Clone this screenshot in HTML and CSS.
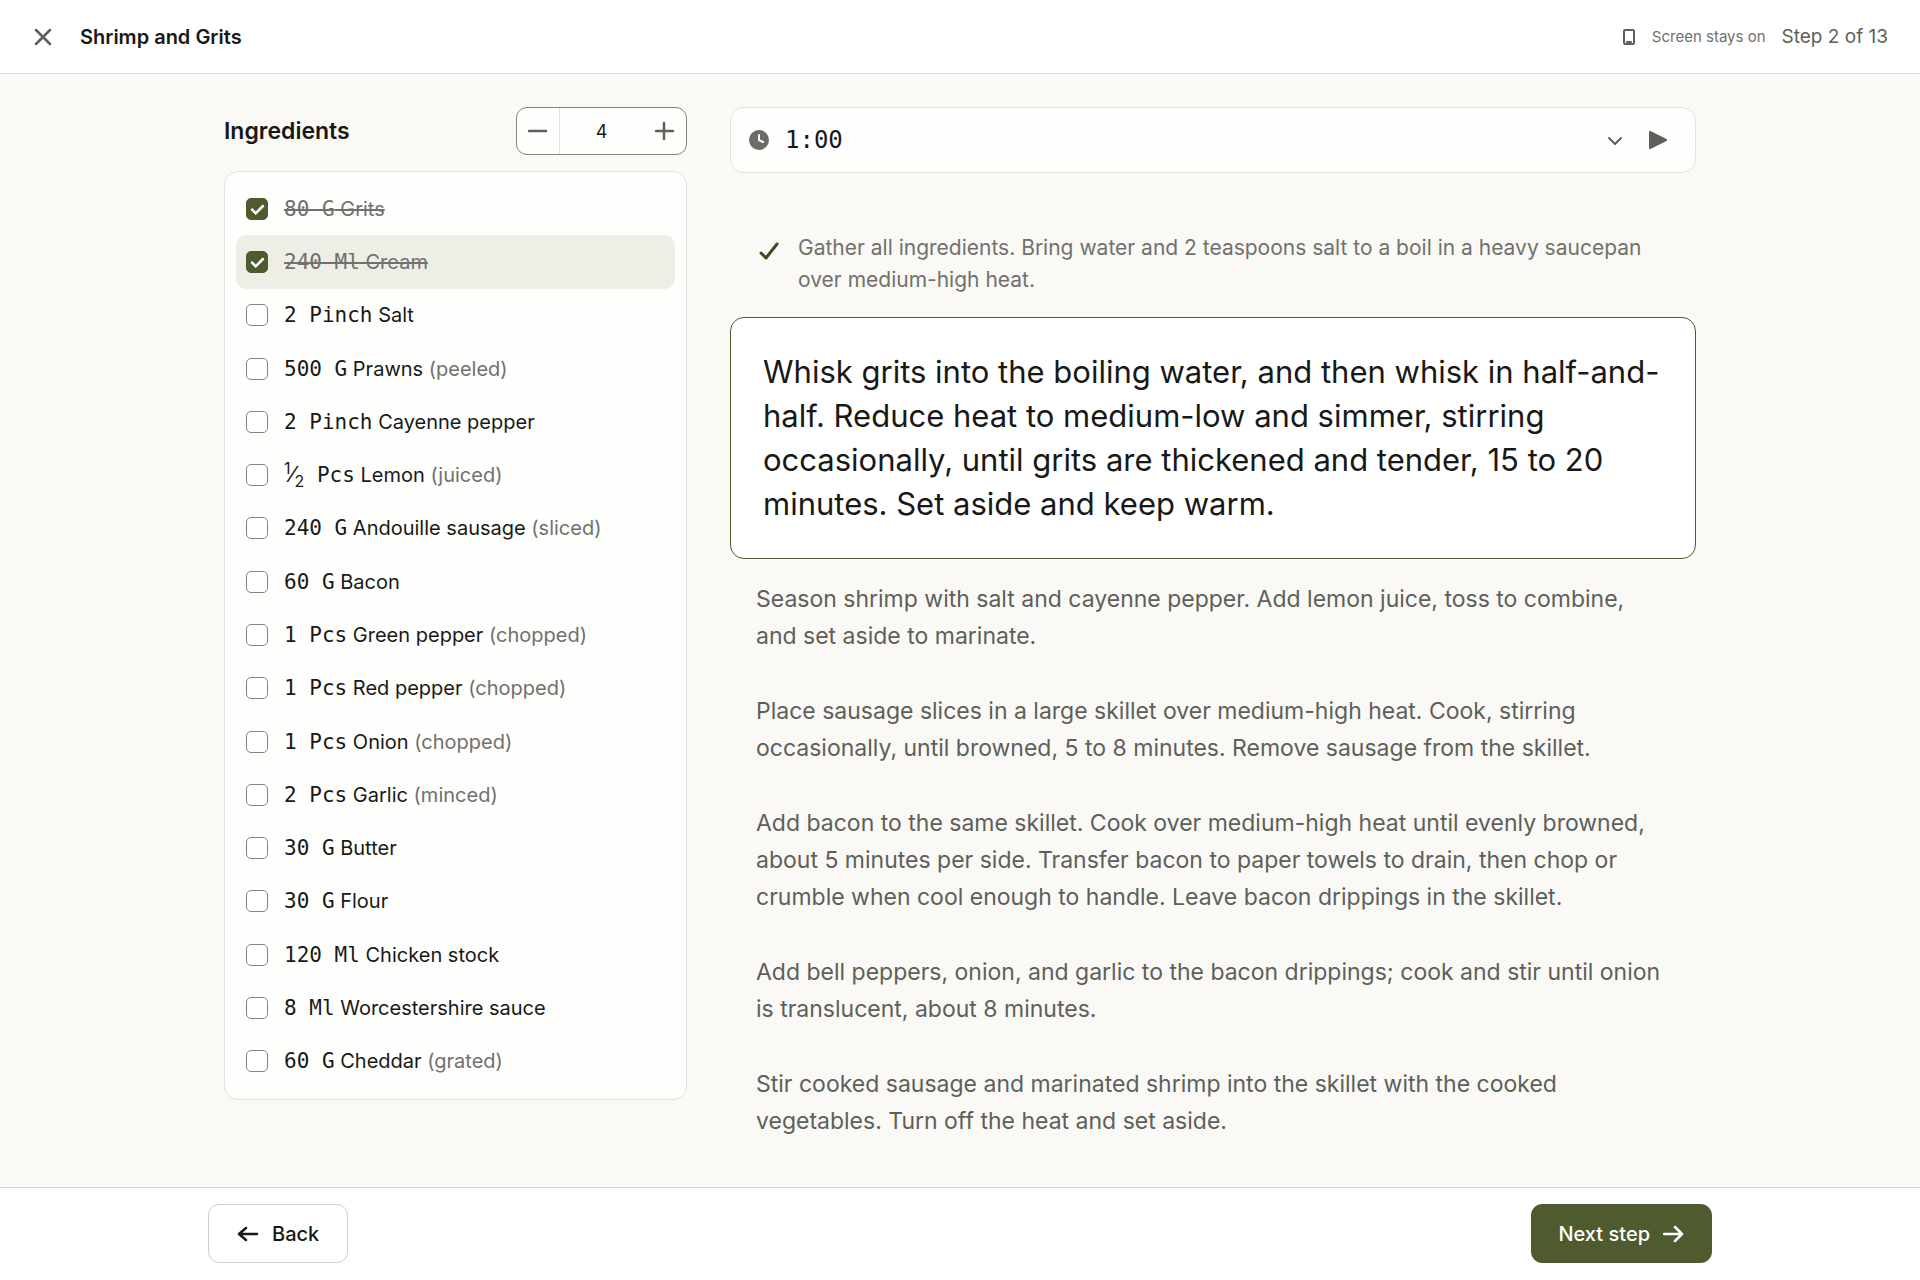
FILE: index.html
```html
<!DOCTYPE html>
<html lang="en">
<head>
  <meta charset="UTF-8">
  <meta name="viewport" content="width=device-width, initial-scale=1">
  <title>Shrimp and Grits</title>
  <link rel="stylesheet" href="styles.css">
</head>
<body>
  <header class="topbar">
    <button class="icon-btn" type="button" aria-label="Close">
      <svg class="bold" width="18" height="18" viewBox="0 0 18 18"><path d="M2 2l14 14M16 2L2 16"/></svg>
    </button>
    <h1 class="topbar__title">Shrimp and Grits</h1>
    <div class="topbar__status">
      <svg class="phone" width="14" height="18" viewBox="0 0 14 18"><rect x="2" y="2" width="10" height="14" rx="1"/><path d="M5 14h4"/></svg>
      <span class="topbar__screen">Screen stays on</span>
      <span class="topbar__step">Step 2 of 13</span>
    </div>
  </header>

  <main class="cook">
    <section class="ingredients">
      <div class="ingredients__head">
        <h2>Ingredients</h2>
        <div class="stepper">
          <button type="button" class="stepper__minus" aria-label="Fewer servings">
            <svg class="bold" width="20" height="20" viewBox="0 0 20 20"><path d="M1 10h17"/></svg>
          </button>
          <input type="text" value="4" aria-label="Servings">
          <button type="button" aria-label="More servings">
            <svg class="bold" width="20" height="20" viewBox="0 0 20 20"><path d="M1 10h17M9 2v16"/></svg>
          </button>
        </div>
      </div>
      <ul class="ingredients__list">
        <li><label><input type="checkbox" checked><span><span class="qty">80 G</span> Grits</span></label></li>
        <li class="active"><label><input type="checkbox" checked><span><span class="qty">240 Ml</span> Cream</span></label></li>
        <li><label><input type="checkbox"><span><span class="qty">2 Pinch</span> Salt</span></label></li>
        <li><label><input type="checkbox"><span><span class="qty">500 G</span> Prawns <em>(peeled)</em></span></label></li>
        <li><label><input type="checkbox"><span><span class="qty">2 Pinch</span> Cayenne pepper</span></label></li>
        <li><label><input type="checkbox"><span><span class="qty"><span class="frac"><sup>1</sup>⁄<sub>2</sub></span> Pcs</span> Lemon <em>(juiced)</em></span></label></li>
        <li><label><input type="checkbox"><span><span class="qty">240 G</span> Andouille sausage <em>(sliced)</em></span></label></li>
        <li><label><input type="checkbox"><span><span class="qty">60 G</span> Bacon</span></label></li>
        <li><label><input type="checkbox"><span><span class="qty">1 Pcs</span> Green pepper <em>(chopped)</em></span></label></li>
        <li><label><input type="checkbox"><span><span class="qty">1 Pcs</span> Red pepper <em>(chopped)</em></span></label></li>
        <li><label><input type="checkbox"><span><span class="qty">1 Pcs</span> Onion <em>(chopped)</em></span></label></li>
        <li><label><input type="checkbox"><span><span class="qty">2 Pcs</span> Garlic <em>(minced)</em></span></label></li>
        <li><label><input type="checkbox"><span><span class="qty">30 G</span> Butter</span></label></li>
        <li><label><input type="checkbox"><span><span class="qty">30 G</span> Flour</span></label></li>
        <li><label><input type="checkbox"><span><span class="qty">120 Ml</span> Chicken stock</span></label></li>
        <li><label><input type="checkbox"><span><span class="qty">8 Ml</span> Worcestershire sauce</span></label></li>
        <li><label><input type="checkbox"><span><span class="qty">60 G</span> Cheddar <em>(grated)</em></span></label></li>
      </ul>
    </section>

    <section class="method">
      <div class="timer">
        <svg class="timer__clock" width="20" height="20" viewBox="0 0 20 20"><circle cx="10" cy="10" r="10"/><path d="M10 5v5l4 2"/></svg>
        <span class="timer__time">1:00</span>
        <button type="button" class="icon-btn" aria-label="Change timer">
          <svg width="16" height="16" viewBox="0 0 16 16"><path d="M1 6l6 6 6-6"/></svg>
        </button>
        <button type="button" class="icon-btn" aria-label="Start timer">
          <svg class="play" width="20" height="20" viewBox="0 0 20 20"><path d="M2 2l16 8-16 8z"/></svg>
        </button>
      </div>
      <ol class="steps">
        <li class="step step--done">
          <svg width="22" height="22" viewBox="0 0 22 22"><path d="M3 13l5 5L19 4"/></svg>
          <p>Gather all ingredients. Bring water and 2 teaspoons salt to a boil in a heavy saucepan over medium-high heat.</p>
        </li>
        <li class="step step--current">Whisk grits into the boiling water, and then whisk in half-and-half. Reduce heat to medium-low and simmer, stirring occasionally, until grits are thickened and tender, 15 to 20 minutes. Set aside and keep warm.</li>
        <li class="step">Season shrimp with salt and cayenne pepper. Add lemon juice, toss to combine, and set aside to marinate.</li>
        <li class="step">Place sausage slices in a large skillet over medium-high heat. Cook, stirring occasionally, until browned, 5 to 8 minutes. Remove sausage from the skillet.</li>
        <li class="step">Add bacon to the same skillet. Cook over medium-high heat until evenly browned, about 5 minutes per side. Transfer bacon to paper towels to drain, then chop or crumble when cool enough to handle. Leave bacon drippings in the skillet.</li>
        <li class="step">Add bell peppers, onion, and garlic to the bacon drippings; cook and stir until onion is translucent, about 8 minutes.</li>
        <li class="step">Stir cooked sausage and marinated shrimp into the skillet with the cooked vegetables. Turn off the heat and set aside.</li>
      </ol>
    </section>
  </main>

  <footer class="bottombar">
    <div class="bottombar__inner">
      <button type="button" class="btn">
        <svg class="bold" width="22" height="20" viewBox="0 0 22 20"><path d="M20 10H2M9 4l-7 6 7 6"/></svg>
        Back
      </button>
      <button type="button" class="btn btn--primary">
        Next step
        <svg class="bold" width="22" height="20" viewBox="0 0 22 20"><path d="M1 10h18M12 3l7 7-7 7"/></svg>
      </button>
    </div>
  </footer>
</body>
</html>
```
FILE: styles.css
```css
:root {
  --bg: #faf9f6;
  --card: #fefefd;
  --text: #181916;
  --muted: #70716d;
  --soft: #5d5f5a;
  --line: #e2e2df;
  --green: #4e5b2e;
}

* {
  box-sizing: border-box;
}

body {
  margin: 0;
  min-height: 100vh;
  display: flex;
  flex-direction: column;
  background: var(--bg);
  color: var(--text);
  font-family: Inter, "Liberation Sans", sans-serif;
  font-size: 20px;
}

h1, h2, p, ul, ol {
  margin: 0;
  padding: 0;
}

ul, ol {
  list-style: none;
}

button, input {
  font: inherit;
  color: inherit;
}

svg {
  display: block;
  flex: none;
  fill: none;
  stroke: currentColor;
  stroke-width: 2;
  stroke-linecap: round;
  stroke-linejoin: round;
}

svg.bold {
  stroke-width: 2.5;
}

.icon-btn {
  display: flex;
  align-items: center;
  justify-content: center;
  width: 42px;
  height: 42px;
  padding: 0;
  border: 0;
  background: none;
  color: var(--soft);
}

/* top bar */
.topbar {
  display: flex;
  align-items: center;
  gap: 16px;
  height: 74px;
  padding: 0 32px 0 22px;
  background: #fff;
  border-bottom: 1px solid #dededb;
}

.topbar__title {
  font-size: 20px;
  font-weight: 600;
}

.topbar__status {
  display: flex;
  align-items: center;
  gap: 16px;
  margin-left: auto;
  color: var(--soft);
}

.topbar__screen {
  font-size: 15px;
  color: var(--muted);
}

.topbar__step {
  font-size: 19px;
}

/* content */
.cook {
  flex: 1;
  display: grid;
  grid-template-columns: 463fr 966fr;
  gap: 43px;
  align-items: start;
  width: 100%;
  max-width: 1536px;
  margin: 0 auto;
  padding: 33px 32px 16px;
}

.ingredients__head {
  display: flex;
  align-items: center;
  justify-content: space-between;
  height: 48px;
  margin-bottom: 16px;
}

.ingredients__head h2 {
  font-size: 23px;
  font-weight: 600;
}

.stepper {
  display: flex;
  width: 171px;
  height: 48px;
  background: var(--card);
  border: 1px solid #84857c;
  border-radius: 11px;
  overflow: hidden;
}

.stepper button {
  display: flex;
  align-items: center;
  justify-content: center;
  width: 43px;
  padding: 0;
  border: 0;
  background: none;
  color: var(--soft);
}

.stepper .stepper__minus {
  border-right: 1px solid var(--line);
}

.stepper input {
  flex: 1;
  min-width: 0;
  padding: 0;
  border: 0;
  background: none;
  font-size: 18px;
  text-align: center;
}

.ingredients__list {
  display: grid;
  grid-auto-rows: 1fr;
  min-height: 929px;
  padding: 10px 11px 11px;
  background: var(--card);
  border: 1px solid var(--line);
  border-radius: 14px;
}

.ingredients__list li {
  border-radius: 10px;
}

.ingredients__list .active {
  background: #eeeee6;
}

.ingredients__list label {
  display: flex;
  align-items: center;
  gap: 16px;
  height: 100%;
  padding: 0 10px;
  line-height: 32px;
}

.ingredients__list em {
  font-style: normal;
  color: var(--muted);
}

.ingredients__list input {
  appearance: none;
  flex: none;
  display: grid;
  place-items: center;
  width: 22px;
  height: 22px;
  margin: 0;
  background: #fff;
  border: 1px solid #84857c;
  border-radius: 5px;
}

.ingredients__list input:checked {
  background: var(--green);
  border-color: var(--green);
}

.ingredients__list input:checked::before {
  content: "";
  box-sizing: border-box;
  width: 13px;
  height: 8px;
  border: solid #fff;
  border-width: 0 0 3px 3px;
  border-radius: 1px;
  transform: translateY(-1px) rotate(-45deg);
}

.ingredients__list input:checked + span {
  color: var(--muted);
  text-decoration: line-through;
}

.qty {
  font-family: "DejaVu Sans Mono", monospace;
  font-size: 21px;
}

.frac {
  font-family: Inter, sans-serif;
}

.frac sup,
.frac sub {
  font-size: 16px;
  line-height: 0;
}

/* timer */
.timer {
  display: flex;
  align-items: center;
  height: 66px;
  padding: 0 16px 0 18px;
  background: var(--card);
  border: 1px solid var(--line);
  border-radius: 14px;
}

.timer__clock {
  fill: #6b6d68;
  stroke: none;
}

.timer__clock path {
  fill: none;
  stroke: #fff;
}

.timer__time {
  flex: 1;
  padding-left: 16px;
  font-family: "DejaVu Sans Mono", monospace;
  font-size: 24px;
}

.play {
  fill: currentColor;
}

/* steps */
.steps {
  margin-top: 48px;
}

.step {
  padding: 19px 26px;
  color: var(--soft);
  font-size: 23px;
  line-height: 37px;
}

.step--done {
  display: flex;
  gap: 18px;
  padding: 11px 26px 21px 28px;
  color: var(--muted);
  font-size: 21px;
  line-height: 32px;
}

.step--done svg {
  margin-top: 8px;
  stroke: #3f4a22;
  stroke-width: 3;
}

.step--current {
  margin-bottom: 3px;
  padding: 32px;
  background: #fff;
  border: 1px solid var(--green);
  border-radius: 14px;
  color: var(--text);
  font-size: 31px;
  line-height: 44px;
}

/* bottom bar */
.bottombar {
  position: sticky;
  bottom: 0;
  background: #fff;
  border-top: 1px solid #d9d9d5;
}

.bottombar__inner {
  display: flex;
  justify-content: space-between;
  max-width: 1568px;
  margin: 0 auto;
  padding: 16px 32px 17px;
}

.btn {
  display: flex;
  align-items: center;
  gap: 13px;
  height: 59px;
  padding: 0 28px;
  background: #fff;
  border: 1px solid #cfcfca;
  border-radius: 11px;
  font-weight: 500;
}

.btn--primary {
  padding: 0 26px;
  background: var(--green);
  border-color: var(--green);
  color: #fff;
}
```
